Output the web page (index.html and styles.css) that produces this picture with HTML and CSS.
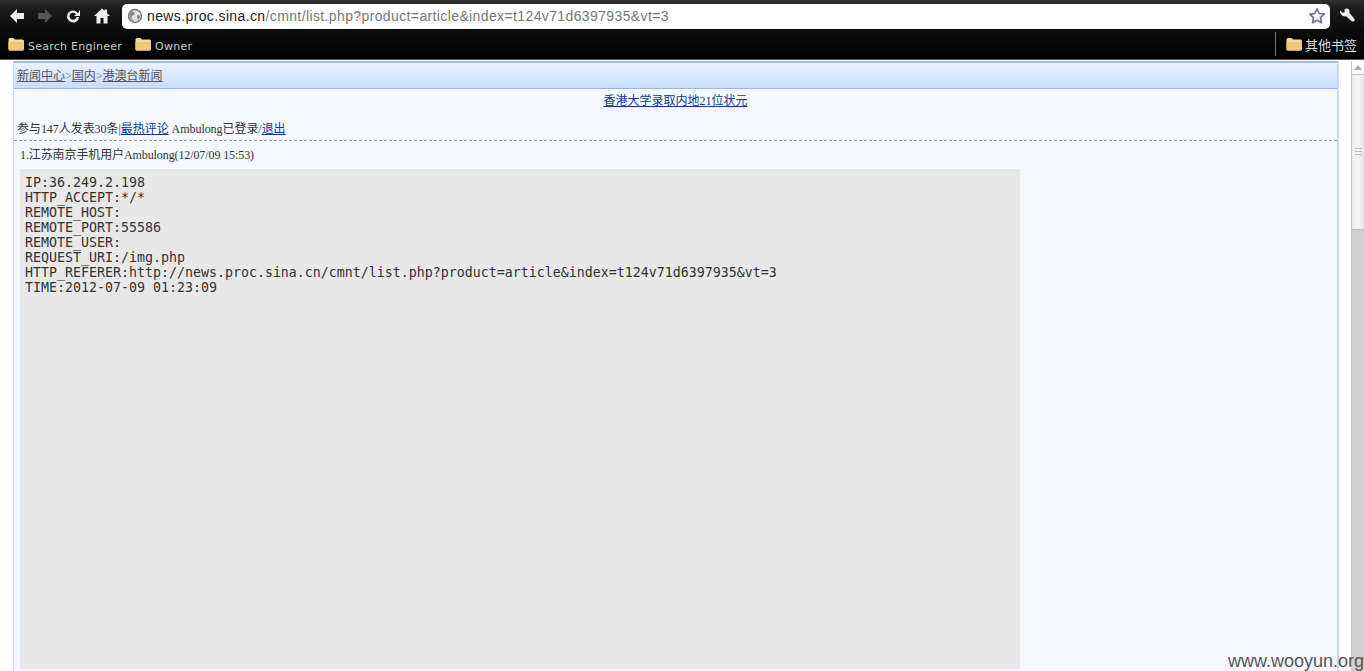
FILE: index.html
```html
<!DOCTYPE html>
<html lang="zh">
<head>
<meta charset="utf-8">
<title>news.proc.sina.cn</title>
<link rel="stylesheet" href="styles.css">
</head>
<body>
<div class="browser">
  <header class="chrome">
    <div class="toolbar">
      <svg class="tool" viewBox="0 0 18 18"><path d="M9 2 2 9l7 7V12h7V6H9z" fill="#eee"/></svg>
      <svg class="tool" viewBox="0 0 18 18"><path d="M9 2l7 7-7 7V12H2V6h7z" fill="#555"/></svg>
      <svg class="tool" viewBox="0 0 18 18"><path d="M14 6.2A6 6 0 1 0 15 10h-2.600A3.500 3.500 0 1 1 12 7.500L9.800 9H16V2.500z" fill="#eee"/></svg>
      <svg class="tool home" viewBox="0 0 18 18"><path d="M9 1.500 1 9h2.500v7.500h4V11h3v5.500h4V9H17l-3-2.800V2.500h-2.500v1.400z" fill="#eee"/></svg>
      <div class="omnibox">
        <svg class="globe" viewBox="0 0 16 16"><circle cx="8" cy="8" r="6.500" fill="#dfe2e6" stroke="#777" stroke-width="1.400"/><path d="M5 3.500c2 0 3 1 2.500 2.500S5 7 4.500 9 6 11 7 13c-2.500-.5-4.500-2.500-4.500-5 0-2 1-3.500 2.500-4.500zM10 7l3.300.5c0 2-1 3.500-2.300 4.300L10 9.500z" fill="#888"/></svg>
        <div class="url"><span class="host">news.proc.sina.cn</span>/cmnt/list.php?product=article&amp;index=t124v71d6397935&amp;vt=3</div>
        <svg class="star" viewBox="0 0 18 18"><path d="M9 1.800l2.200 4.700 5 .6-3.700 3.500 1 5.100L9 13.200l-4.500 2.500 1-5.100L1.800 7.100l5-.6z" fill="#fff" stroke="#6d7686" stroke-width="1.700" stroke-linejoin="round"/></svg>
      </div>
      <svg class="wrench" viewBox="0 0 18 18"><path d="M2 3.500 5 5.800 6.800 5 6.200 2.800C7.800 1 10.400 1.300 11.300 3.300c.4 1 .3 1.800 0 2.500l5.200 6.200c.8 1.500-.8 3.200-2.400 2.400L8 9.300C5 10 1.800 7.500 2 3.500z" fill="#eee"/></svg>
    </div>
    <div class="bookmarks">
      <div class="mark">
        <svg class="folder" viewBox="0 0 16 14"><path d="M.5 2.500Q.5 1 2 1h3.500l1.500 1.500h7.500q1.500 0 1.500 1.500v8q0 1.500-1.500 1.500H2Q.5 13.500.5 12z" fill="#f5d9a0"/><path d="M.5 5h15v7q0 1.500-1.500 1.500H2Q.5 13.500.5 12z" fill="#f0c878"/></svg>
        <span>Search Engineer</span>
      </div>
      <div class="mark">
        <svg class="folder" viewBox="0 0 16 14"><path d="M.5 2.500Q.5 1 2 1h3.500l1.500 1.500h7.500q1.500 0 1.500 1.500v8q0 1.500-1.500 1.500H2Q.5 13.500.5 12z" fill="#f5d9a0"/><path d="M.5 5h15v7q0 1.500-1.500 1.500H2Q.5 13.500.5 12z" fill="#f0c878"/></svg>
        <span>Owner</span>
      </div>
      <div class="mark other">
        <svg class="folder" viewBox="0 0 16 14"><path d="M.5 2.500Q.5 1 2 1h3.500l1.500 1.500h7.500q1.500 0 1.500 1.500v8q0 1.500-1.500 1.500H2Q.5 13.500.5 12z" fill="#f5d9a0"/><path d="M.5 5h15v7q0 1.500-1.500 1.500H2Q.5 13.500.5 12z" fill="#f0c878"/></svg>
        <span>其他书签</span>
      </div>
    </div>
  </header>
  <div class="viewport">
    <main class="page">
      <div class="frame">
        <nav class="crumbs"><a href="#">新闻中心</a><i>&gt;</i><a href="#">国内</a><i>&gt;</i><a href="#">港澳台新闻</a></nav>
        <div class="headline"><a href="#">香港大学录取内地21位状元</a></div>
        <div class="stats">参与147人发表30条|<a href="#">最热评论</a> Ambulong已登录/<a href="#">退出</a></div>
        <div class="comment-head">1.江苏南京手机用户Ambulong(12/07/09 15:53)</div>
        <pre class="dump">IP:36.249.2.198
HTTP_ACCEPT:*/*
REMOTE_HOST:
REMOTE_PORT:55586
REMOTE_USER:
REQUEST_URI:/img.php
HTTP_REFERER:http://news.proc.sina.cn/cmnt/list.php?product=article&amp;index=t124v71d6397935&amp;vt=3
TIME:2012-07-09 01:23:09</pre>
      </div>
    </main>
    <div class="scrollbar">
      <div class="arrow"></div>
      <div class="thumb"><span class="grip"></span></div>
      <div class="track"></div>
    </div>
    <div class="watermark">www.wooyun.org</div>
  </div>
</div>
</body>
</html>
```
FILE: styles.css
```css
* { box-sizing: border-box; }
html, body { margin: 0; height: 100%; overflow: hidden; }
body { background: #fff; font-family: "Liberation Serif", "Noto Sans CJK SC", serif; }
.browser { display: flex; flex-direction: column; height: 671px; }
.chrome { height: 60px; flex: none; background: linear-gradient(#303030 0, #1c1c1c 8px, #0b0b0b 30px, #000 60px); border-bottom: 1px solid #555; }
.toolbar { height: 31px; display: flex; align-items: center; padding: 1px 0 0 8px; }
.tool { width: 18px; height: 18px; margin-right: 10px; flex: none; }
.home { margin-left: 1px; margin-right: 11px; }
.omnibox { width: 1208px; height: 25px; margin-left: 0; background: #fff; border-radius: 5px; display: flex; align-items: center; padding: 0 4px 0 5px; }
.globe { width: 16px; height: 16px; flex: none; }
.url { flex: 1; margin-left: 4px; font: 14px/25px "Liberation Sans", sans-serif; letter-spacing: .38px; color: #777; white-space: nowrap; }
.host { color: #222; }
.star { width: 18px; height: 18px; flex: none; }
.wrench { width: 18px; height: 18px; margin-left: 8px; flex: none; }
.bookmarks { height: 28px; display: flex; align-items: center; padding: 0 0 2px 8px; color: #ccc; font: 11px "DejaVu Sans", "Noto Sans CJK SC", sans-serif; }
.mark { display: flex; align-items: center; gap: 4px; margin-right: 13px; }
.mark span { letter-spacing: .25px; padding-top: 4px; }
.folder { width: 16px; height: 14px; flex: none; }
.other { margin-left: auto; margin-right: 0; height: 24px; padding: 0 6px 0 10px; border-left: 1px solid #777; width: 89px; gap: 3px; }
.other span { color: #ddd; font-size: 13px; letter-spacing: 0; white-space: nowrap; padding-top: 0; }
.viewport { flex: 1; min-height: 0; display: flex; position: relative; overflow: hidden; }
.page { flex: 1; min-width: 0; padding: 1px 12px 0 13px; }
.frame { height: 640px; background: #f5f8fe; border: solid #c9d9ee; border-width: 0 2px 0 1px; font-size: 12px; color: #333; overflow: hidden; }
.crumbs { height: 28px; padding: 5px 0 0 3px; line-height: 16px; background: linear-gradient(#e9f2fe, #c6dcfb); border-top: 2px solid #a3bce0; border-bottom: 1px solid #9db5dc; color: #777; font-size: 12px; }
.crumbs a { color: #555; }
.crumbs i { font-style: normal; }
.headline { height: 24px; padding-top: 4px; text-align: center; line-height: 16px; }
.headline a, .stats a { color: #0b3a94; }
.stats { height: 28px; padding: 8px 0 0 3px; line-height: 16px; border-bottom: 1px dashed #999; color: #333; letter-spacing: -.05px; }
.comment-head { height: 28px; padding: 7px 0 0 6px; line-height: 15px; letter-spacing: -.1px; }
.dump { margin: 0 0 0 6px; width: 1000px; height: 500px; padding: 6px 5px; background: #e8e8e8; color: #333; font: 13.290px/15px "DejaVu Sans Mono", monospace; }
.scrollbar { width: 13px; flex: none; margin-top: 1px; display: flex; flex-direction: column; background: #f1f1f1; border-left: 1px solid #c4c4c4; }
.arrow { height: 14px; flex: none; background: #fdfdfd; border-bottom: 1px solid #c4c4c4; position: relative; }
.arrow::after { content: ""; position: absolute; left: 2px; top: 4px; border: 4px solid transparent; border-top: 0; border-bottom: 5px solid #aaa; }
.thumb { height: 155px; flex: none; background: linear-gradient(90deg, #ececec, #f6f6f6, #e6e6e6); border-bottom: 1px solid #b5b5b5; display: flex; align-items: center; justify-content: center; }
.grip { width: 7px; height: 9px; background: repeating-linear-gradient(#bbb 0 1px, transparent 1px 3px); }
.track { flex: 1; background: #d0d0d0; }
.watermark { position: absolute; right: 0; bottom: -1px; font: 18px/22px "Liberation Sans", sans-serif; color: #555; }
```
